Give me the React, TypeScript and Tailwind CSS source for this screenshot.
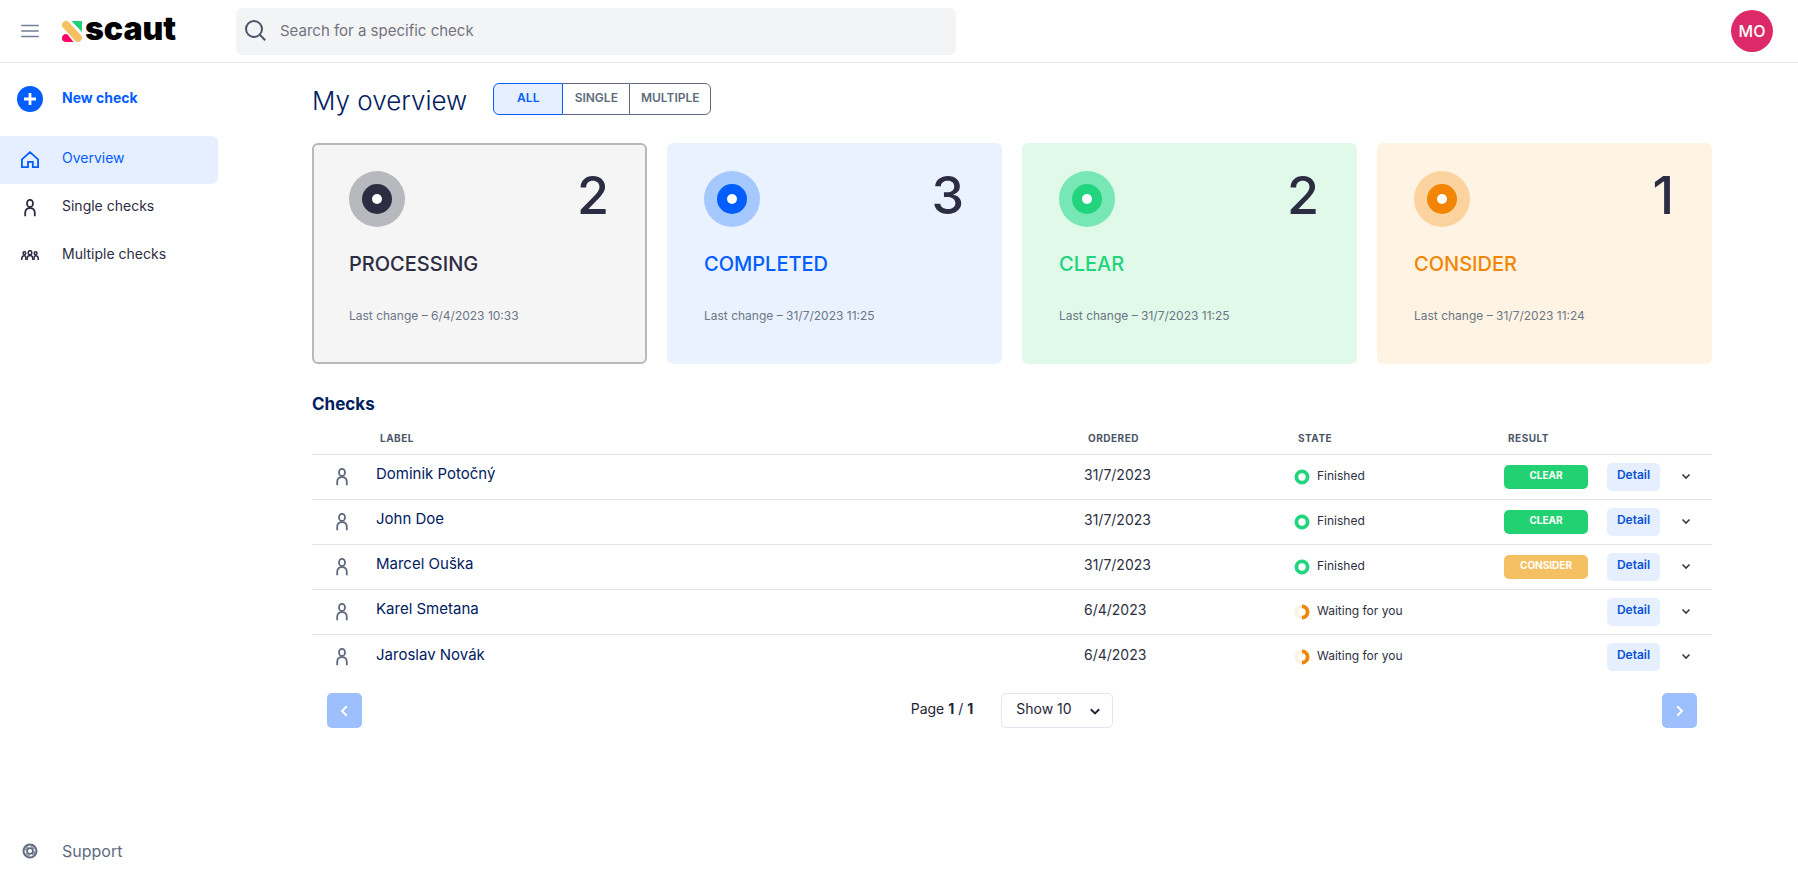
import React from 'react';

type State = 'Finished' | 'Waiting for you';
type Result = 'CLEAR' | 'CONSIDER' | null;

const cards = [
  {
    title: 'PROCESSING',
    count: 2,
    changed: '6/4/2023 10:33',
    box: 'bg-[#f5f5f5] border-[#b7b7be]',
    text: 'text-[#2c2c42]',
    halo: 'bg-[#b8b8bf]',
    dot: 'bg-[#2c2c42]',
  },
  {
    title: 'COMPLETED',
    count: 3,
    changed: '31/7/2023 11:25',
    box: 'bg-[#eaf2ff] border-[#eaf2ff]',
    text: 'text-[#035dff]',
    halo: 'bg-[#a5c8ff]',
    dot: 'bg-[#035dff]',
  },
  {
    title: 'CLEAR',
    count: 2,
    changed: '31/7/2023 11:25',
    box: 'bg-[#e1f9e8] border-[#e1f9e8]',
    text: 'text-[#23d47e]',
    halo: 'bg-[#77e8b5]',
    dot: 'bg-[#23d47e]',
  },
  {
    title: 'CONSIDER',
    count: 1,
    changed: '31/7/2023 11:24',
    box: 'bg-[#fff4e3] border-[#fff4e3]',
    text: 'text-[#f38505]',
    halo: 'bg-[#fcd39e]',
    dot: 'bg-[#f38505]',
  },
];

const checks: { name: string; ordered: string; state: State; result: Result }[] = [
  { name: 'Dominik Potočný', ordered: '31/7/2023', state: 'Finished', result: 'CLEAR' },
  { name: 'John Doe', ordered: '31/7/2023', state: 'Finished', result: 'CLEAR' },
  { name: 'Marcel Ouška', ordered: '31/7/2023', state: 'Finished', result: 'CONSIDER' },
  { name: 'Karel Smetana', ordered: '6/4/2023', state: 'Waiting for you', result: null },
  { name: 'Jaroslav Novák', ordered: '6/4/2023', state: 'Waiting for you', result: null },
];

function LogoMark() {
  return (
    <svg width="20" height="21" viewBox="0 0 20 21" aria-hidden="true">
      <path d="M9.5 0H20v11z" fill="#22d07a" />
      <path d="M0 17.2a4 4 0 0 1 4-4.2l1.5.6 6 7.4H3.4A3.4 3.4 0 0 1 0 17.2z" fill="#fd0065" />
      <path d="M4 4.1l12 12.8" stroke="#fff" strokeWidth="9" strokeLinecap="round" />
      <path d="M4 4.1l12 12.8" stroke="#f5c063" strokeWidth="8" strokeLinecap="round" />
    </svg>
  );
}

function PersonIcon({ className }: { className?: string }) {
  return (
    <svg width="12" height="18" viewBox="0 0 12 18" fill="none" stroke="currentColor" strokeWidth="1.8" className={className} aria-hidden="true">
      <ellipse cx="6" cy="4.4" rx="3" ry="3.6" />
      <path d="M1.2 17.3V14c0-3 1.8-4.8 4.8-4.8s4.8 1.8 4.8 4.8v3.3" />
    </svg>
  );
}

function PeopleIcon() {
  return (
    <svg width="18" height="12" viewBox="0 0 18 12" fill="none" stroke="currentColor" strokeWidth="1.5" aria-hidden="true">
      <ellipse cx="9" cy="2.7" rx="1.8" ry="2" />
      <path d="M6.2 10V8.4c0-2 1.1-3 2.8-3s2.8 1 2.8 3V10" />
      <circle cx="3.4" cy="3.2" r="1.4" />
      <path d="M.8 10V8.6c0-1.8 1-2.8 2.6-2.8.9 0 1.5.8 1.5 2.2v2" />
      <circle cx="14.6" cy="3.2" r="1.4" />
      <path d="M17.2 10V8.6c0-1.8-1-2.8-2.6-2.8-.9 0-1.5.8-1.5 2.2v2" />
    </svg>
  );
}

function HomeIcon() {
  return (
    <svg width="18" height="18" viewBox="0 0 18 18" fill="none" stroke="currentColor" strokeWidth="1.8" aria-hidden="true">
      <path d="M.9 16.2V8.4L9 1.2l8.1 7.2v7.8h-5.3v-5.4H7v5.4z" />
    </svg>
  );
}

function SupportIcon() {
  return (
    <svg width="16" height="16" viewBox="0 0 16 16" fill="none" stroke="currentColor" aria-hidden="true">
      <circle cx="8" cy="8" r="6.5" strokeWidth="2" />
      <circle cx="8" cy="8" r="4.7" strokeWidth="1.4" strokeDasharray="5 2.4" opacity="0.7" />
      <circle cx="8" cy="8" r="2.9" strokeWidth="1.8" />
    </svg>
  );
}

function Chevron({ d, size, width }: { d: 'down' | 'left' | 'right'; size: number; width: number }) {
  const paths = {
    down: 'M1.5 3.5L5 7l3.5-3.5',
    left: 'M6.5 1L2.5 5l4 4',
    right: 'M3.5 1l4 4-4 4',
  };
  return (
    <svg width={size} height={size} viewBox="0 0 10 10" fill="none" stroke="currentColor" strokeWidth={width} aria-hidden="true">
      <path d={paths[d]} />
    </svg>
  );
}

function StateIcon({ state }: { state: State }) {
  if (state === 'Finished') {
    return (
      <svg width="16" height="16" viewBox="0 0 16 16" fill="none" aria-hidden="true">
        <circle cx="8" cy="8" r="5.6" stroke="#23d47e" strokeWidth="3.8" />
      </svg>
    );
  }
  return (
    <svg width="16" height="16" viewBox="0 0 16 16" fill="none" strokeWidth="3.8" aria-hidden="true">
      <circle cx="8" cy="8" r="5.6" stroke="#fff2e0" />
      <path d="M8 2.4a5.6 5.6 0 0 1 0 11.2" stroke="#f38505" />
    </svg>
  );
}

function NavItem({ icon, label, active }: { icon: React.ReactNode; label: string; active?: boolean }) {
  return (
    <a
      href="#"
      className={
        active
          ? 'mr-2 flex h-12 items-center rounded-r-md bg-[#e5efff] text-sm text-[#035dff]'
          : 'mr-2 flex h-12 items-center text-sm text-[#2c2c42]'
      }
    >
      <span className="flex w-[62px] justify-center pr-[2px]">{icon}</span>
      <span className="pb-1">{label}</span>
    </a>
  );
}

function Header() {
  return (
    <header className="flex h-[63px] items-center border-b border-[#e2e8f0]">
      <button type="button" aria-label="Toggle menu" className="flex w-[62px] justify-center pr-[2px] text-[#718096]">
        <svg width="18" height="14" viewBox="0 0 18 14" stroke="currentColor" strokeWidth="1.6" strokeLinecap="round" aria-hidden="true">
          <path d="M.8 1.5h16.4M.8 7h16.4M.8 12.5h16.4" />
        </svg>
      </button>
      <a href="#" className="flex w-[174px] items-center gap-[3px] text-black">
        <LogoMark />
        <span className="pb-1 text-[32px] leading-8 font-black">scaut</span>
      </a>
      <label className="flex h-[47px] w-full max-w-[720px] items-center rounded-md bg-[#f3f4f6] px-2">
        <svg width="24" height="24" viewBox="0 0 24 24" fill="none" stroke="#4a5568" strokeWidth="2" aria-hidden="true">
          <circle cx="10" cy="10" r="8" />
          <path d="M15.8 15.8l5.4 5.4" />
        </svg>
        <input
          type="text"
          aria-label="Search"
          placeholder="Search for a specific check"
          className="ml-3 flex-1 bg-transparent text-[15px] outline-none placeholder:text-[#73737f]"
        />
      </label>
      <button type="button" className="mr-[25px] ml-auto flex size-[42px] shrink-0 items-center justify-center rounded-full bg-[#dc2a69] text-base font-medium text-white">
        MO
      </button>
    </header>
  );
}

function Sidebar() {
  return (
    <nav className="flex w-[226px] shrink-0 flex-col">
      <a href="#" className="mt-3 flex h-12 items-center text-sm font-bold text-[#035dff]">
        <span className="flex w-[62px] justify-center pr-[2px]">
          <svg width="26" height="26" viewBox="0 0 26 26" aria-hidden="true">
            <circle cx="13" cy="13" r="13" fill="#035dff" />
            <path d="M13 7v12M7 13h12" stroke="#fff" strokeWidth="2.8" />
          </svg>
        </span>
        <span className="pb-[2px]">New check</span>
      </a>
      <div className="mt-[13px]">
        <NavItem icon={<HomeIcon />} label="Overview" active />
        <NavItem icon={<PersonIcon />} label="Single checks" />
        <NavItem icon={<PeopleIcon />} label="Multiple checks" />
      </div>
      <a href="#" className="mt-auto mb-2 flex h-12 items-center text-base text-[#5f6b7d]">
        <span className="flex w-[62px] justify-center pr-[2px]">
          <SupportIcon />
        </span>
        <span>Support</span>
      </a>
    </nav>
  );
}

export default function App() {
  return (
    <div className="flex min-h-screen flex-col bg-white font-['Inter','Noto_Sans',sans-serif]">
      <Header />
      <div className="flex flex-1">
        <Sidebar />
        <main className="min-w-0 flex-1">
          <div className="mx-auto max-w-[1400px] pt-5">
            <div className="flex items-start gap-[26px]">
              <h1 className="text-[26px] leading-9 font-light text-[#02205f]">My overview</h1>
              <div className="flex h-8 text-xs font-semibold text-[#5f6b7d]">
                <button type="button" className="w-[70px] rounded-l-md border border-[#035dff] bg-[#e5efff] pb-[2px] text-[#035dff]">
                  ALL
                </button>
                <button type="button" className="w-[66px] border-y border-[#5f6b7d] pb-[2px]">
                  SINGLE
                </button>
                <button type="button" className="w-[82px] rounded-r-md border border-[#5f6b7d] pb-[2px]">
                  MULTIPLE
                </button>
              </div>
            </div>

            <div className="mt-6 grid grid-cols-4 gap-5">
              {cards.map((card) => (
                <section key={card.title} className={`h-[221px] rounded-md border-2 pt-[26px] pr-9 pl-[35px] ${card.box}`}>
                  <div className="flex justify-between">
                    <div className={`flex size-14 items-center justify-center rounded-full ${card.halo}`}>
                      <div className={`flex size-[30px] items-center justify-center rounded-full ${card.dot}`}>
                        <div className="size-[10px] rounded-full bg-white" />
                      </div>
                    </div>
                    <div className="text-[52px] leading-[50px] font-medium text-[#2c2c42]">{card.count}</div>
                  </div>
                  <h2 className={`mt-[23px] text-xl leading-7 font-medium ${card.text}`}>{card.title}</h2>
                  <p className="mt-7 text-xs leading-5 text-[#6b7686]">Last change – {card.changed}</p>
                </section>
              ))}
            </div>

            <h2 className="mt-7 text-[17px] leading-6 font-bold text-[#02205f]">Checks</h2>
            <table className="mt-2 w-full table-fixed">
              <colgroup>
                <col className="w-16" />
                <col />
                <col className="w-[210px]" />
                <col className="w-[210px]" />
                <col className="w-[103px]" />
                <col className="w-[53px]" />
                <col className="w-[52px]" />
              </colgroup>
              <thead>
                <tr className="h-[30px] border-b border-[#e2e4ec] text-left text-[10px] tracking-wider text-[#4a5568]">
                  <th />
                  <th className="pl-1 font-bold">LABEL</th>
                  <th className="pl-1 font-bold">ORDERED</th>
                  <th className="pl-1 font-bold">STATE</th>
                  <th className="pl-1 font-bold">RESULT</th>
                  <th />
                  <th />
                </tr>
              </thead>
              <tbody>
                {checks.map((check) => (
                  <tr key={check.name} className="h-[45px] border-b border-[#e2e4ec] last:border-b-0">
                    <td className="pl-6 text-[#5f6b7d]">
                      <PersonIcon />
                    </td>
                    <td className="pb-1 text-[15px] text-[#02205f]">{check.name}</td>
                    <td className="pb-1 text-sm text-[#2d3042]">{check.ordered}</td>
                    <td>
                      <div className="flex items-center gap-[7px] text-xs text-[#2d3042]">
                        <StateIcon state={check.state} />
                        <span className="pb-[2px]">{check.state}</span>
                      </div>
                    </td>
                    <td>
                      {check.result && (
                        <span
                          className={`flex h-6 w-[84px] items-center justify-center rounded-[5px] pb-[2px] text-[10px] font-bold text-white ${
                            check.result === 'CLEAR' ? 'bg-[#22d172]' : 'bg-[#f5c062]'
                          }`}
                        >
                          {check.result}
                        </span>
                      )}
                    </td>
                    <td>
                      <button type="button" className="flex h-7 w-full items-center justify-center rounded-[5px] bg-[#e5efff] pb-1 text-xs font-semibold text-[#0a52d6]">
                        Detail
                      </button>
                    </td>
                    <td>
                      <button type="button" aria-label="More" className="flex h-7 w-full items-center justify-center pb-[2px] text-[#3a3a46]">
                        <Chevron d="down" size={10} width={1.6} />
                      </button>
                    </td>
                  </tr>
                ))}
              </tbody>
            </table>

            <div className="mt-[14px] flex items-center justify-between px-[15px]">
              <button type="button" aria-label="Previous page" className="flex size-[35px] items-center justify-center rounded-[5px] bg-[#9ebffd] text-white">
                <Chevron d="left" size={12} width={1.6} />
              </button>
              <div className="flex items-center gap-7 text-sm text-[#1f2536]">
                <span className="pb-1">
                  Page <b>1</b> / <b>1</b>
                </span>
                <div className="relative">
                  <select aria-label="Rows per page" className="h-[35px] w-28 appearance-none rounded-[5px] border border-[#e2e6f0] bg-white pb-1 pl-[14px]">
                    <option>Show 10</option>
                    <option>Show 20</option>
                    <option>Show 50</option>
                  </select>
                  <span className="pointer-events-none absolute inset-y-0 right-3 flex items-center">
                    <Chevron d="down" size={12} width={1.6} />
                  </span>
                </div>
              </div>
              <button type="button" aria-label="Next page" className="flex size-[35px] items-center justify-center rounded-[5px] bg-[#9ebffd] text-white">
                <Chevron d="right" size={12} width={1.6} />
              </button>
            </div>
          </div>
        </main>
      </div>
    </div>
  );
}
